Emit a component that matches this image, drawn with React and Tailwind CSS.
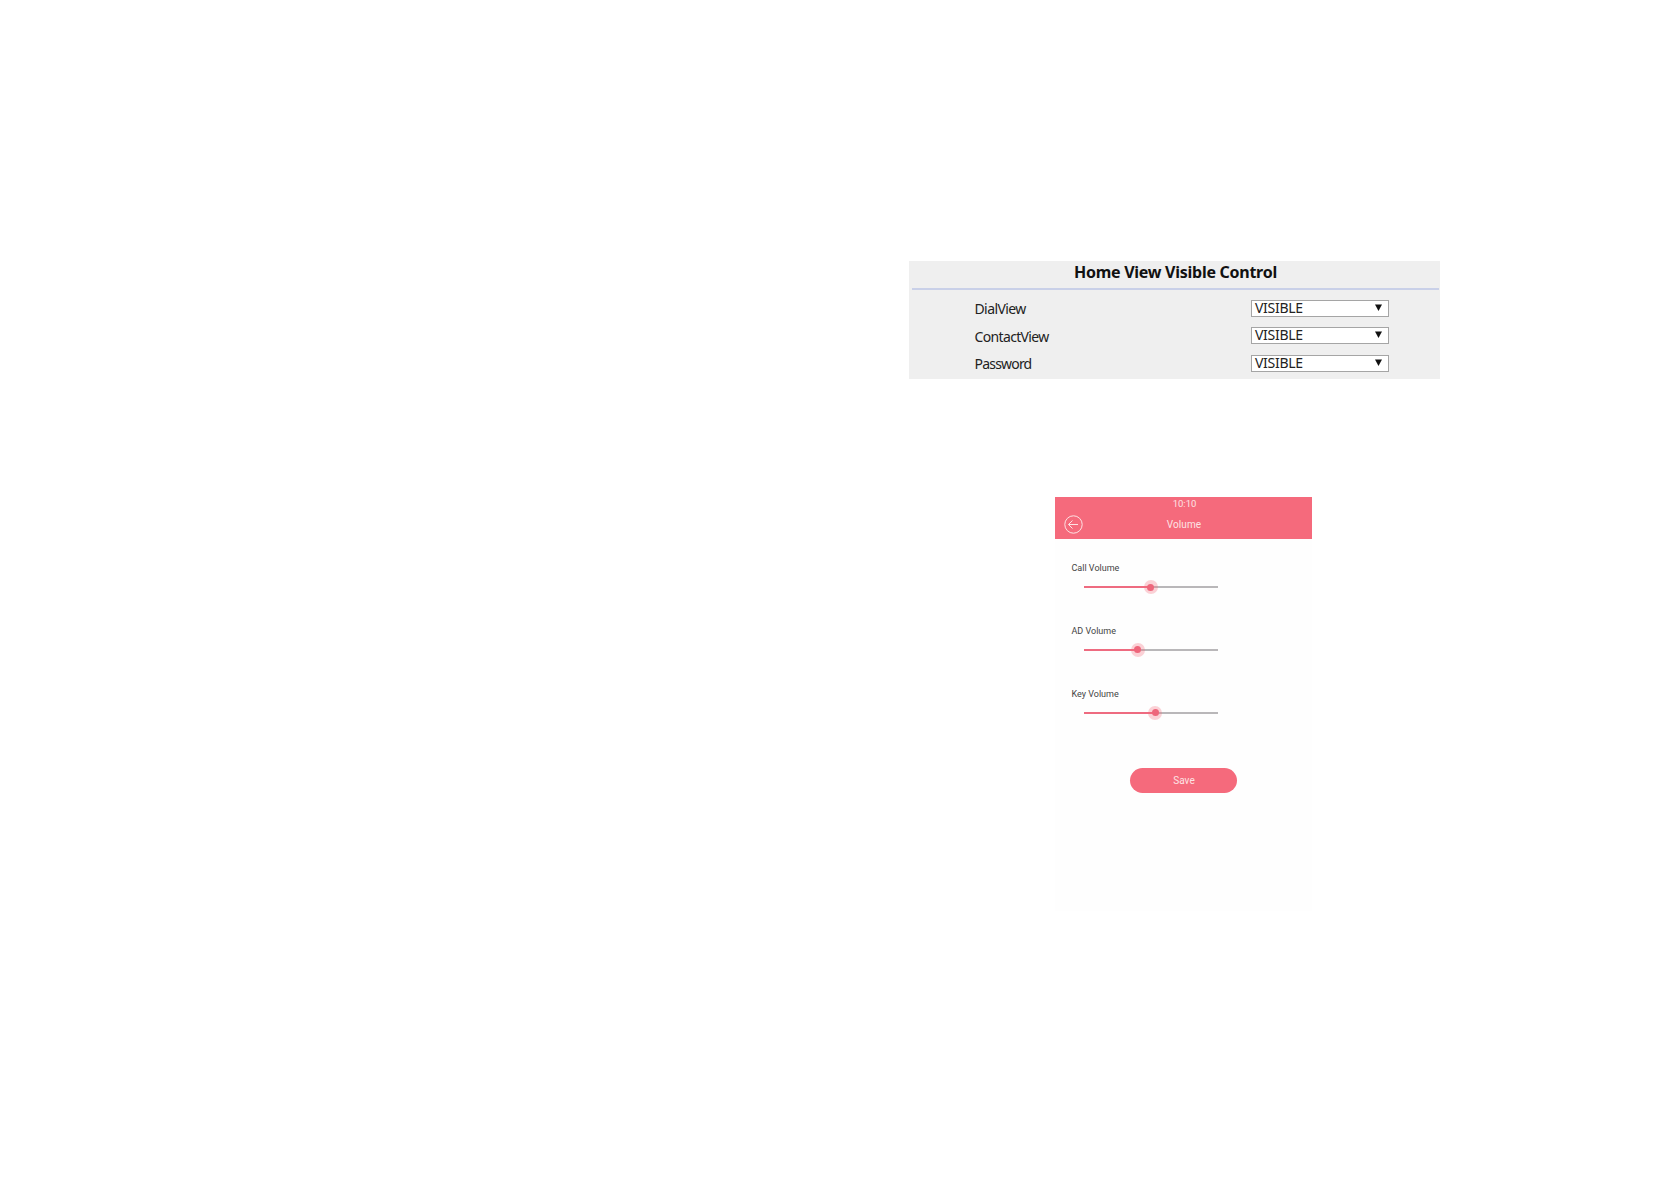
const views = [
  { name: 'DialView', spacing: 'tracking-[-0.6px]' },
  { name: 'ContactView', spacing: 'tracking-[-0.65px]' },
  { name: 'Password', spacing: 'tracking-[-0.8px]' },
];

const sliders = [
  { name: 'Call Volume', value: 66.5 },
  { name: 'AD Volume', value: 53.5 },
  { name: 'Key Volume', value: 71 },
];

function HomeViewControl() {
  return (
    <section className="ml-[909px] h-[118px] w-[531px] bg-[#efefef] font-['Noto_Sans','DejaVu_Sans',sans-serif] text-[#222]">
      <h2 className="h-[27px] pl-[165px] text-[16px] leading-[22px] font-bold tracking-[-0.27px] whitespace-nowrap text-[#111]">
        Home View Visible Control
      </h2>
      <div className="mr-px ml-[3px] h-[2px] bg-[#c9d0e8]"></div>
      <div className="pt-[6px]">
        {views.map((view) => (
          <div key={view.name} className="flex h-[27.7px] pl-[65.5px]">
            <span className={`w-[276.5px] pt-[2px] text-[14px] leading-[22px] ${view.spacing}`}>{view.name}</span>
            <div className="mt-[3.5px] flex h-[17px] w-[138px] items-center justify-between border border-[#a5a5a5] bg-white pr-[6px] pl-[3px]">
              <span className="mb-[2px] text-[14px] leading-[15px] tracking-[-0.3px]">VISIBLE</span>
              <svg width="7" height="7" viewBox="0 0 7 7" className="mb-[2px]">
                <path d="M0 0.5h7L3.5 7z" fill="#111" />
              </svg>
            </div>
          </div>
        ))}
      </div>
    </section>
  );
}

function Slider({ name, value }) {
  return (
    <div className="h-[62.8px]">
      <div className="h-[24px] pl-[16.5px] text-[9px] leading-[12px] text-[#444]">{name}</div>
      <div className="relative ml-[29px] h-[2px] w-[134px] bg-[#b9b7b9]">
        <div className="h-full bg-[#ee6b80]" style={{ width: value }}></div>
        <div
          className="absolute top-[-6px] flex h-[14px] w-[14px] items-center justify-center rounded-full bg-[#f56a7c]/30"
          style={{ left: value - 7 }}
        >
          <div className="h-[7px] w-[7px] rounded-full bg-[#ee667b]"></div>
        </div>
      </div>
    </div>
  );
}

function VolumeScreen() {
  return (
    <section className="mt-[118px] ml-[1055px] h-[414px] w-[257px] bg-[#fefefe] font-['Roboto',sans-serif]">
      <header className="h-[42px] bg-[#f56a7c] text-center text-[#fde3e4]">
        <div className="h-[14px] pl-[2px] text-[9.5px] leading-[14px]">10:10</div>
        <div className="grid grid-cols-[36px_1fr_36px] items-center">
          <svg width="19" height="19" viewBox="0 0 19 19" fill="none" stroke="#fde3e4" className="ml-[8.5px]">
            <circle cx="9.5" cy="9.5" r="8.7" />
            <path d="M14 9.5H4.5M8.5 5.5l-4 4 4 4" />
          </svg>
          <div className="pl-px text-[10px] leading-[27px] tracking-[0.1px]">Volume</div>
        </div>
      </header>
      <main className="pt-[23px]">
        {sliders.map((slider) => (
          <Slider key={slider.name} name={slider.name} value={slider.value} />
        ))}
        <button className="mt-[17.6px] ml-[75px] block h-[25px] w-[107px] rounded-full bg-[#f56a7c] pl-px text-[10px] leading-[26px] text-[#fde3e4]">
          Save
        </button>
      </main>
    </section>
  );
}

export default function App() {
  return (
    <div className="h-[1185px] w-[1678px] overflow-hidden bg-white pt-[261px]">
      <HomeViewControl />
      <VolumeScreen />
    </div>
  );
}
